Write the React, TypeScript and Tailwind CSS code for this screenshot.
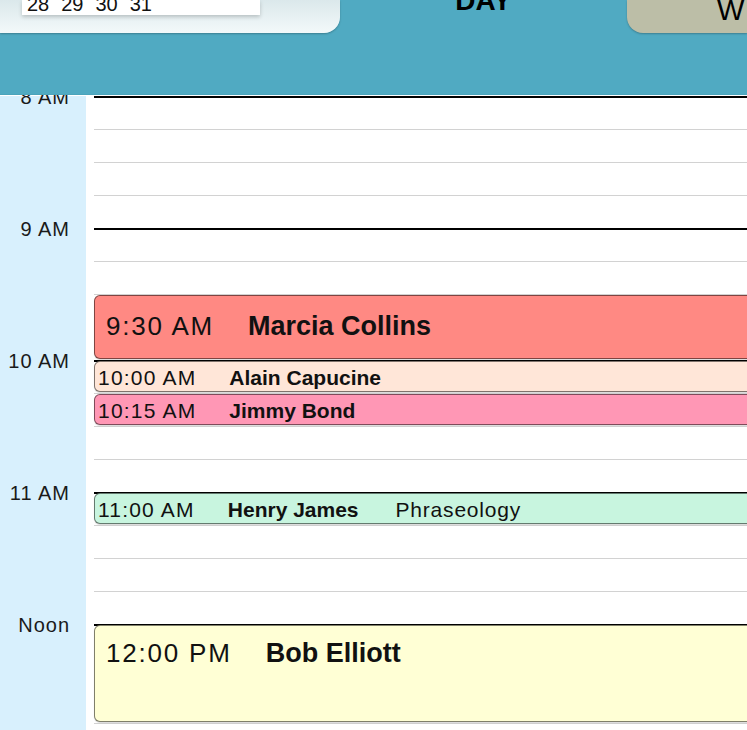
import React from 'react';

type CalEvent = {
  start: number; // minutes from 8:00
  duration: number;
  time: string;
  name: string;
  note?: string;
  big?: boolean;
  color: string;
  align: string;
};

const SLOT = 33; // px per 15 minutes

const hours = ['8 AM', '9 AM', '10 AM', '11 AM', 'Noon', '1 PM'];

const events: CalEvent[] = [
  { start: 90, duration: 30, time: '9:30 AM', name: 'Marcia Collins', big: true, color: 'bg-[#ff8983]', align: 'items-center pb-[3px]' },
  { start: 120, duration: 15, time: '10:00 AM', name: 'Alain Capucine', color: 'bg-[#ffe6d8]', align: 'items-center pt-[2px]' },
  { start: 135, duration: 15, time: '10:15 AM', name: 'Jimmy Bond', color: 'bg-[#ff97b5]', align: 'items-center pt-[2px]' },
  { start: 180, duration: 15, time: '11:00 AM', name: 'Henry James', note: 'Phraseology', color: 'bg-[#c8f5df]', align: 'items-center pt-[2px]' },
  { start: 240, duration: 45, time: '12:00 PM', name: 'Bob Elliott', big: true, color: 'bg-[#ffffd5]', align: 'items-start pt-[11px]' },
];

function TabStrip() {
  return (
    <div className="flex h-[33px]">
      <div className="w-[340px] h-full rounded-br-[16px] bg-gradient-to-b from-[#dbe8eb] to-[#f3f9fa] shadow-[0_1px_2px_rgba(0,0,0,0.25)] pl-[22px]">
        <div className="w-[238px] h-[15px] bg-white overflow-hidden shadow-[0_2px_4px_rgba(0,0,0,0.2)]">
          <div className="flex gap-[12px] pl-[5px] -mt-[8px] text-[20px] leading-[24px] text-[#111]">
            <span>28</span>
            <span>29</span>
            <span>30</span>
            <span>31</span>
          </div>
        </div>
      </div>
      <div className="flex-1 h-full overflow-hidden flex justify-center">
        <span className="-mt-[15px] text-[28px] leading-[32px] font-bold text-black">DAY</span>
      </div>
      <div className="w-[120px] h-full rounded-bl-[16px] bg-[#bcbea7] shadow-[0_1px_2px_rgba(0,0,0,0.25)] overflow-hidden pl-[90px]">
        <span className="block -mt-[6px] text-[29px] leading-[32px] text-black">W</span>
      </div>
    </div>
  );
}

function EventBlock({ ev }: { ev: CalEvent }) {
  const top = (ev.start / 15) * SLOT + 1;
  const height = (ev.duration / 15) * SLOT - 2;
  return (
    <div
      className={`absolute left-0 -right-[20px] rounded-[6px] border-[1.5px] border-black/50 shadow-[0_1px_1px_rgba(0,0,0,0.15)] flex ${ev.color} ${ev.align} ${ev.big ? 'px-[11px]' : 'px-[3px]'}`}
      style={{ top, height }}
    >
      {ev.big ? (
        <div className="flex gap-[34px] leading-[32px] text-[#111]">
          <span className="text-[26px] tracking-[1.8px]">{ev.time}</span>
          <span className="text-[27px] font-bold">{ev.name}</span>
        </div>
      ) : (
        <div className="flex gap-[33px] leading-[24px] text-[#111]">
          <span className="text-[21px] tracking-[1.2px]">{ev.time}</span>
          <span className="text-[21px] font-bold">{ev.name}</span>
          {ev.note && <span className="text-[21px] tracking-[0.8px] ml-[4px]">{ev.note}</span>}
        </div>
      )}
    </div>
  );
}

function Timeline() {
  return (
    <div className="flex-1 overflow-hidden bg-white">
      <div className="flex pt-[1px]">
        {/* Hour labels */}
        <div className="w-[86px] shrink-0 bg-[#d8f0fd]">
          {hours.map((h) => (
            <div key={h} className="h-[132px] flex flex-col">
              <div className="-mt-[11px] h-[24px] shrink-0 leading-[24px] text-[20px] tracking-[1px] text-[#1a1a1a] text-right pr-[16px]">
                {h}
              </div>
            </div>
          ))}
        </div>

        {/* Grid */}
        <div className="flex-1 pl-[8px]">
          <div className="relative">
            {hours.map((h) => (
              <div key={h}>
                <div className="h-[33px] border-t-2 border-black" />
                <div className="h-[33px] border-t border-[#d2d2d2]" />
                <div className="h-[33px] border-t border-[#d2d2d2]" />
                <div className="h-[33px] border-t border-[#d2d2d2]" />
              </div>
            ))}
            {events.map((ev) => (
              <EventBlock key={ev.time} ev={ev} />
            ))}
          </div>
        </div>
      </div>
    </div>
  );
}

export default function App() {
  return (
    <div className="w-[747px] h-[730px] overflow-hidden flex flex-col bg-white" style={{ fontFamily: '"Liberation Sans", Arial, sans-serif' }}>
      <header className="h-[95px] shrink-0 bg-[#50aac2] border-b border-[#4ba4bb]">
        <TabStrip />
      </header>
      <Timeline />
    </div>
  );
}
